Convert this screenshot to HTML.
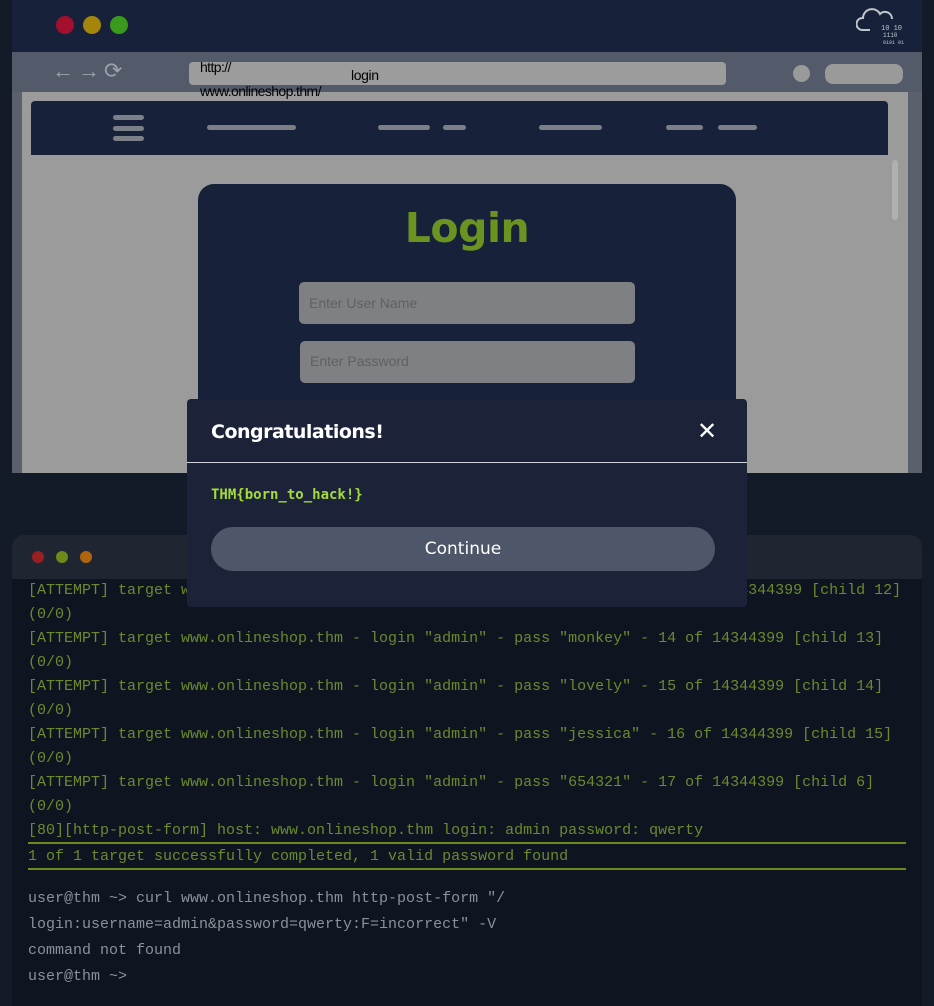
<!DOCTYPE html>
<html><head><style>
*{margin:0;padding:0;box-sizing:border-box}
body{width:934px;height:1006px;background:#131b29;position:relative;overflow:hidden;font-family:"Liberation Sans",sans-serif}
.a{position:absolute}
.bar{position:absolute;background:#7a7f88;border-radius:3px;height:5px}
.t{position:absolute;left:28px;font-family:"Liberation Mono",monospace;font-size:15px;color:#6b8a2e;white-space:pre;line-height:24px}
.w{color:#8c9099}
</style></head><body>
<div class="a" style="left:12px;top:0;width:910px;height:52px;background:#17223a"></div>
<div class="a" style="left:56px;top:16px;width:18px;height:18px;border-radius:50%;background:#a3102e"></div>
<div class="a" style="left:83px;top:16px;width:18px;height:18px;border-radius:50%;background:#a4860c"></div>
<div class="a" style="left:110px;top:16px;width:18px;height:18px;border-radius:50%;background:#3a9a1e"></div>
<svg class="a" style="left:856px;top:4px" width="50" height="44" viewBox="0 0 50 44"><path d="M14 26 H6 a6 6 0 0 1 1-12 a9 9 0 0 1 17-4 a7 7 0 0 1 12 5" fill="none" stroke="#c0c4cc" stroke-width="2"/><text x="25" y="26" font-size="7" fill="#c0c4cc" font-family="Liberation Mono">10 10</text><text x="27" y="33" font-size="6" fill="#c0c4cc" font-family="Liberation Mono">1110</text><text x="27" y="40" font-size="5" fill="#c0c4cc" font-family="Liberation Mono">0101 01</text></svg>
<div class="a" style="left:12px;top:52px;width:910px;height:40px;background:#535a69"></div>
<div class="a" style="left:12px;top:92px;width:910px;height:381px;background:#5a606c"></div>
<div class="a" style="left:22px;top:92px;width:886px;height:381px;background:#9b9b9b"></div>
<div class="a" style="left:52px;top:60px;color:#9aa0ac;font-size:22px;line-height:22px;letter-spacing:4px">←→⟳</div>
<div class="a" style="left:189px;top:62px;width:537px;height:23px;background:#9c9c9c;border-radius:4px"></div>
<div class="a" style="left:200px;top:55px;font-size:14px;color:#000;line-height:24px;letter-spacing:-0.6px">http://<br>www.onlineshop.thm/</div>
<div class="a" style="left:351px;top:67px;font-size:14px;color:#000;letter-spacing:-0.4px">login</div>
<div class="a" style="left:793px;top:65px;width:17px;height:17px;border-radius:50%;background:#9a9a9a"></div>
<div class="a" style="left:825px;top:64px;width:78px;height:20px;border-radius:8px;background:#9a9a9a"></div>
<div class="a" style="left:31px;top:101px;width:857px;height:54px;background:#17223a;border-radius:4px 4px 0 0"></div>
<div class="bar" style="left:113px;top:115px;width:31px"></div>
<div class="bar" style="left:113px;top:126px;width:31px"></div>
<div class="bar" style="left:113px;top:136px;width:31px"></div>
<div class="bar" style="left:207px;top:125px;width:89px"></div>
<div class="bar" style="left:378px;top:125px;width:52px"></div>
<div class="bar" style="left:443px;top:125px;width:23px"></div>
<div class="bar" style="left:539px;top:125px;width:63px"></div>
<div class="bar" style="left:666px;top:125px;width:37px"></div>
<div class="bar" style="left:718px;top:125px;width:39px"></div>
<div class="a" style="left:892px;top:160px;width:6px;height:60px;border-radius:3px;background:#b0b0b0"></div>
<div class="a" style="left:198px;top:184px;width:538px;height:289px;background:#17223a;border-radius:16px 16px 0 0"></div>
<div class="a" style="left:198px;top:204px;width:538px;text-align:center;font-size:41px;font-weight:bold;color:#6a9320;font-family:'DejaVu Sans',sans-serif;letter-spacing:-0.5px">Login</div>
<div class="a" style="left:299px;top:282px;width:336px;height:42px;background:#7f8083;border-radius:5px;color:#5f6065;font-size:14px;padding:13px 10px">Enter User Name</div>
<div class="a" style="left:300px;top:341px;width:335px;height:42px;background:#7f8083;border-radius:5px;color:#5f6065;font-size:14px;padding:12px 10px">Enter Password</div>
<div class="a" style="left:12px;top:535px;width:910px;height:44px;background:#1f2531;border-radius:12px 12px 0 0"></div>
<div class="a" style="left:32px;top:551px;width:12px;height:12px;border-radius:50%;background:#9a1f23"></div>
<div class="a" style="left:56px;top:551px;width:12px;height:12px;border-radius:50%;background:#6c8a17"></div>
<div class="a" style="left:80px;top:551px;width:12px;height:12px;border-radius:50%;background:#b0650c"></div>
<div class="a" style="left:12px;top:579px;width:910px;height:427px;background:#0e1521"></div>
<div class="t" style="top:579px">[ATTEMPT] target www.onlineshop.thm - login "admin" - pass "iloveyou" - 13 of 14344399 [child 12]
(0/0)
[ATTEMPT] target www.onlineshop.thm - login "admin" - pass "monkey" - 14 of 14344399 [child 13]
(0/0)
[ATTEMPT] target www.onlineshop.thm - login "admin" - pass "lovely" - 15 of 14344399 [child 14]
(0/0)
[ATTEMPT] target www.onlineshop.thm - login "admin" - pass "jessica" - 16 of 14344399 [child 15]
(0/0)
[ATTEMPT] target www.onlineshop.thm - login "admin" - pass "654321" - 17 of 14344399 [child 6]
(0/0)
[80][http-post-form] host: www.onlineshop.thm login: admin password: qwerty</div>
<div class="a" style="left:28px;top:842px;width:878px;height:2px;background:#6b8a20"></div>
<div class="t" style="top:845px">1 of 1 target successfully completed, 1 valid password found</div>
<div class="a" style="left:28px;top:868px;width:878px;height:2px;background:#6b8a20"></div>
<div class="t w" style="top:886px;line-height:26px">user@thm ~&gt; curl www.onlineshop.thm http-post-form "/
login:username=admin&amp;password=qwerty:F=incorrect" -V
command not found
user@thm ~&gt;</div>
<div class="a" style="left:187px;top:399px;width:560px;height:208px;background:#1c2338;border-radius:4px"></div>
<div class="a" style="left:211px;top:421px;font-size:19px;font-weight:bold;color:#fff;font-family:'DejaVu Sans',sans-serif;letter-spacing:-0.5px">Congratulations!</div>
<div class="a" style="left:697px;top:417px;font-size:24px;color:#fff;font-family:'DejaVu Sans',sans-serif">✕</div>
<div class="a" style="left:187px;top:462px;width:560px;height:1px;background:#d0d4dc"></div>
<div class="a" style="left:211px;top:487px;font-family:'DejaVu Sans Mono',monospace;font-weight:bold;font-size:14px;color:#a4dc3c">THM{born_to_hack!}</div>
<div class="a" style="left:211px;top:527px;width:504px;height:44px;border-radius:22px;background:#4e5669;color:#fff;text-align:center;line-height:44px;font-size:17px;font-family:'DejaVu Sans',sans-serif">Continue</div>
</body></html>
